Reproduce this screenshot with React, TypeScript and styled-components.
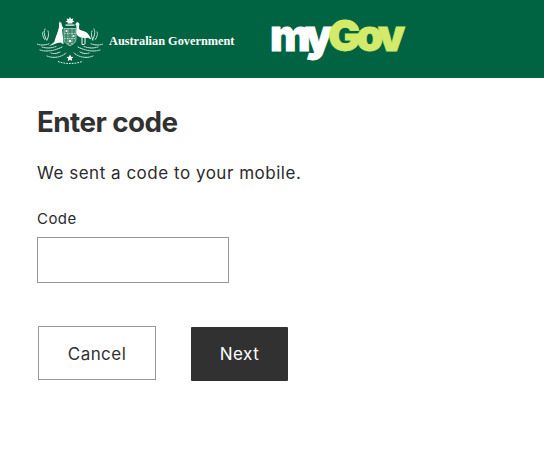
import React from "react";
import styled, { createGlobalStyle } from "styled-components";

const Global = createGlobalStyle`
  html, body { margin: 0; padding: 0; background: #fff; }
  body { font-family: Inter, "Liberation Sans", sans-serif; color: #313131; }
`;
const Header = styled.header`
  height: 78px; background: #006341; display: flex; align-items: center; padding-left: 37px;
`;
const GovLockup = styled.div`
  display: flex; align-items: center; width: 233px; gap: 6px; margin-top: 3px;
`;
const GovName = styled.span`
  font-family: "Liberation Serif", serif; font-weight: 700; font-size: 12.3px; color: #fff;
  white-space: nowrap; margin-top: 2px;
`;
const Logo = styled.div`
  font-family: Inter, "Liberation Sans", sans-serif; font-weight: 900; font-size: 43px; letter-spacing: -4.4px;
  line-height: 44px; margin-top: -8px; -webkit-text-stroke: 0.8px currentColor; color: #fff;
`;
const Accent = styled.span` color: #d3ea6b; `;
const Main = styled.main` padding: 27px 0 0 37px; `;
const Title = styled.h1`
  margin: 0; font-size: 27.8px; line-height: 34px; font-weight: 700; letter-spacing: -0.55px; color: #313131;
`;
const Lead = styled.p`
  margin: 23px 0 0; font-size: 17px; line-height: 22px; color: #2b2b2b; letter-spacing: 0.52px;
`;
const Label = styled.label`
  display: block; margin-top: 25px; font-size: 15px; line-height: 20px; color: #2b2b2b; letter-spacing: 0.45px;
`;
const Input = styled.input`
  display: block; box-sizing: border-box; width: 192px; height: 46px; margin-top: 8px;
  border: 1px solid #979797; background: #fff; padding: 0 8px; outline: none; border-radius: 0;
`;
const Actions = styled.div` display: flex; align-items: flex-start; margin-top: 43px; padding-left: 1px; gap: 35px; `;
const Button = styled.button<{ $primary?: boolean }>`
  box-sizing: border-box; font-family: inherit; font-size: 17px; letter-spacing: 0.45px;
  width: ${p => (p.$primary ? "97px" : "118px")}; height: 54px;
  border: ${p => (p.$primary ? "0" : "1px solid #979797")};
  border-radius: ${p => (p.$primary ? "1px" : "0")};
  background: ${p => (p.$primary ? "#313131" : "#fff")};
  color: ${p => (p.$primary ? "#fff" : "#313131")};
  padding: ${p => (p.$primary ? "0" : "2px 0 0")}; margin-top: ${p => (p.$primary ? "1px" : "0")};
`;

const Crest = () => (
  <svg width="66" height="48" viewBox="0 0 66 48" fill="none" aria-hidden="true">
    {/* crest star */}
    <path d="M33 0l1.100 2 2.300-.6-.8 2.200 2 1.100-2.300.6.1 1.200h-4.800l.1-1.200-2.300-.6 2-1.100-.8-2.200 2.300.6z" fill="#fff" />
    <rect x="28.500" y="7.500" width="9" height="1.200" fill="#fff" />
    {/* shield */}
    <path d="M27 11.500h12v10.500c0 3.400-2.500 5.200-6 6.800-3.500-1.600-6-3.400-6-6.800z" fill="#3f8a6c" stroke="#e6f0ec" strokeWidth=".6" />
    <path d="M27.500 16.500h11M27.500 21.500h11M31 12v15M35 12v15" stroke="#fff" strokeWidth=".6" strokeDasharray="1.300 1" />
    <circle cx="29.500" cy="14" r="1" fill="#fff" />
    <circle cx="36.500" cy="19" r="1" fill="#fff" />
    <circle cx="33" cy="24" r="1.200" fill="#fff" />
    {/* kangaroo */}
    <path d="M22.200 4l.9 2.300.8-1.800 1.200 4.500 1.400 2.200-1.400 1.200.4 4 .6 5 .4 5.800-3-1.600-3.200.4-8.300 3.200 5.300-4.300 1.500-5 2-5.500 1.200-4.500z" fill="#fff" />
    {/* emu */}
    <path d="M41.200 5.500c-1.500-.5-2.700.5-2.400 1.800l-1 .5 1.200.3c.6 1.800.6 4 .3 5.800-.3 1.800.3 4.200 2.400 5.600 2.800 1.800 6.500 1.800 9 1.300l3.800 1.700-2.300-4c-1.200-2.600-4.200-4.500-7.500-5-2.200-.4-3-1.600-2.700-3.500.3-2 1-3.800-.8-4.500z" fill="#fff" />
    <path d="M45 21v6.500h2.500M48 21v6" stroke="#fff" strokeWidth="1" />
    {/* wattle sprays */}
    <g stroke="#fff" strokeWidth="1" strokeLinecap="round" strokeDasharray="1.100 1.100" opacity=".92">
      <path d="M0 27c4 1.500 8 1.200 12-.2" />
      <path d="M3 33c6 2 14 1 22-3" />
      <path d="M5 30c5 1.500 9 1.200 14-.5" />
      <path d="M10 39c6 2.500 14 1.500 19-3" />
      <path d="M66 27c-4 1.500-8 1.200-12-.2" />
      <path d="M63 33c-6 2-14 1-22-3" />
      <path d="M61 30c-5 1.500-9 1.200-14-.5" />
      <path d="M56 39c-6 2.500-14 1.500-19-3" />
      <path d="M8 12c-1.500 3-.5 7 1.500 11M6 15c-1 2 0 5 2 8M11 14c1 3 .5 6-1 9" />
      <path d="M57 12c1.500 3 .5 7-1.500 11M60 15c1 2 0 5-2 8M55 14c-1 3-.5 6 1 9" />
      <path d="M14 36c3 1 6 .5 9-1M52 36c-3 1-6 .5-9-1" />
    </g>
    {/* federation star */}
    <path d="M33 37.500l1.100 2.200 2.400.3-1.800 1.600.5 2.400-2.200-1.200-2.200 1.200.5-2.400-1.800-1.600 2.400-.3z" fill="#fff" />
    <path d="M21 44.500c4 1.500 8 2 12 2s8-.5 12-2" stroke="#fff" strokeWidth=".9" strokeDasharray="1.800 1" />
  </svg>
);

export default function App() {
  return (
    <>
      <Global />
      <Header>
        <GovLockup>
          <Crest />
          <GovName>Australian Government</GovName>
        </GovLockup>
        <Logo>my<Accent>Gov</Accent></Logo>
      </Header>
      <Main>
        <Title>Enter code</Title>
        <Lead>We sent a code to your mobile.</Lead>
        <Label htmlFor="code">Code</Label>
        <Input id="code" type="text" />
        <Actions>
          <Button>Cancel</Button>
          <Button $primary>Next</Button>
        </Actions>
      </Main>
    </>
  );
}
